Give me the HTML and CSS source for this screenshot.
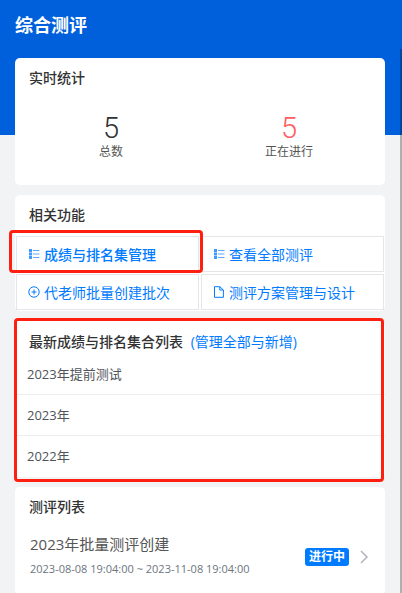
FILE: index.html
```html
<!DOCTYPE html>
<html lang="zh-CN">
<head>
  <meta charset="UTF-8" />
  <title>综合测评</title>
  <meta name="viewport" content="width=device-width, initial-scale=1.0" />
  <link rel="stylesheet" href="styles.css">
</head>
<body>

<div class="scroll-track"></div>

<div class="page">
  <header class="page-header">
    <h1>综合测评</h1>
  </header>

  <!-- Stats -->
  <section class="card">
    <h2>实时统计</h2>
    <div class="stats">
      <div class="stat">
        <span class="stat-num">5</span>
        <span class="stat-label">总数</span>
      </div>
      <div class="stat">
        <span class="stat-num red">5</span>
        <span class="stat-label">正在进行</span>
      </div>
    </div>
  </section>

  <!-- Functions -->
  <section class="card">
    <h2>相关功能</h2>
    <nav class="functions">
      <a href="#" class="active">
        <svg viewBox="0 0 12 12"><path class="fill" d="M1 1h3v3H1zM1 4.5h3v3H1zM1 8h3v3H1z"/><path class="thin" d="M5 2.5h6.5M5 6h6.5M5 9.5h6.5"/></svg>
        成绩与排名集管理
        <span class="mark mark-link"></span>
      </a>
      <a href="#">
        <svg viewBox="0 0 12 12"><path class="fill" d="M1 1h3v3H1zM1 4.5h3v3H1zM1 8h3v3H1z"/><path class="thin" d="M5 2.5h6.5M5 6h6.5M5 9.5h6.5"/></svg>
        查看全部测评
      </a>
      <a href="#">
        <svg viewBox="0 0 12 12"><circle cx="6" cy="6" r="5.2"/><path d="M3.5 6h5M6 3.5v5"/></svg>
        代老师批量创建批次
      </a>
      <a href="#">
        <svg viewBox="0 0 12 12"><path d="M1.5 .7h5.3L10.4 4v7.3H1.5zM6.8 .7V4h3.6"/></svg>
        测评方案管理与设计
      </a>
    </nav>
  </section>

  <!-- Latest rank sets -->
  <section class="card rank-card">
    <h2>最新成绩与排名集合列表 <a href="#">(管理全部与新增)</a></h2>
    <ul class="rank-list">
      <li>2023年提前测试</li>
      <li>2023年</li>
      <li>2022年</li>
    </ul>
    <span class="mark mark-card"></span>
  </section>

  <!-- Evaluation list -->
  <section class="card">
    <h2>测评列表</h2>
    <a href="#" class="item">
      <div class="item-text">
        <div class="item-title">2023年批量测评创建</div>
        <div class="item-time">2023-08-08 19:04:00 ~ 2023-11-08 19:04:00</div>
      </div>
      <span class="badge">进行中</span>
      <svg class="arrow" viewBox="0 0 8 14"><path d="M1 1l6 6-6 6"/></svg>
    </a>
  </section>
</div>

</body>
</html>
```

FILE: styles.css
```css
* {
  margin: 0; padding: 0; box-sizing: border-box;
}

body {
  background: #f2f3f5 linear-gradient(#0060db, #0060db) no-repeat 0 0 / 100% 135px;
  font-family: "Open Sans", "Noto Sans CJK SC", sans-serif;
  font-size: 14px;
  color: #323233;
  overflow: hidden;
}

a { color: #007bff; text-decoration: none; }

ul { list-style: none; }

.scroll-track {
  position: absolute;
  top: 49px; right: 0; bottom: 0;
  width: 2px;
  background: rgba(0,0,0,0.28);
}

.page {
  display: flex;
  flex-direction: column;
  gap: 10px;
  padding: 0 17px 0 15px;
}

.page-header { padding-top: 11px; }

h1 {
  font-size: 18px;
  line-height: 28px;
  color: white;
  height: 37px;
}

.card {
  position: relative;
  background: white;
  border-radius: 5px;
}

h2 {
  font-size: 14px;
  font-weight: 500;
  line-height: 40px;
  padding: 0 14px;
}

.stats {
  display: flex;
  padding: 16px 7px 23px;
}

.stat {
  flex: 1;
  display: flex;
  flex-direction: column;
  align-items: center;
}

.stat-num {
  font-family: Roboto, sans-serif;
  font-size: 29px;
  font-weight: 300;
  line-height: 28px;
}

.red { color: #ff5b60; }

.stat-label {
  font-size: 12px;
  line-height: 20px;
  color: #555;
}

.functions {
  display: grid;
  grid-template-columns: 1fr 1fr;
  gap: 2px;
  padding: 1px;
}

.functions a {
  position: relative;
  display: flex;
  align-items: center;
  gap: 4px;
  height: 36px;
  padding-left: 11px;
  border: 1px solid #e4e6ea;
}

.functions .active { font-weight: 500; }

.functions svg {
  width: 12px;
  height: 12px;
  fill: none;
  stroke: #007bff;
}

.functions .fill { fill: #3d98ff; stroke: none; }

.functions .thin { stroke: #5ca9ff; }

.mark {
  position: absolute;
  border: 3px solid #ff1f10;
  border-radius: 4px;
  pointer-events: none;
  z-index: 1;
}

.mark-link { inset: -7px -5px -2px -8px; }

.mark-card { inset: -3px 1px -5px -1px; }

.rank-card h2 { line-height: 30px; padding-top: 6px; }

.rank-card h2 a { margin-left: 4px; font-weight: 400; }

.rank-list li {
  font-size: 13px;
  line-height: 40px;
  padding: 0 12px;
  color: #50545a;
  border-bottom: 1px solid #ebedf0;
}

.rank-list li:first-child { line-height: 34px; padding-bottom: 3px; }

.rank-list li:last-child { border-bottom-color: white; }

.item {
  display: flex;
  align-items: center;
  padding: 5px 17px 14px 15px;
}

.item-text { flex: 1; }

.item-title {
  font-size: 15px;
  line-height: 25px;
  color: #555;
}

.item-time {
  font-size: 11px;
  line-height: 24px;
  color: #6c757d;
}

.badge {
  font-size: 12px;
  font-weight: 700;
  line-height: 18px;
  padding: 0 4px;
  color: white;
  background: #007bff;
  border-radius: 3px;
}

.arrow {
  width: 8px;
  height: 14px;
  margin-left: 11px;
  fill: none;
  stroke: #b0b3b8;
  stroke-width: 1.5;
}
```
